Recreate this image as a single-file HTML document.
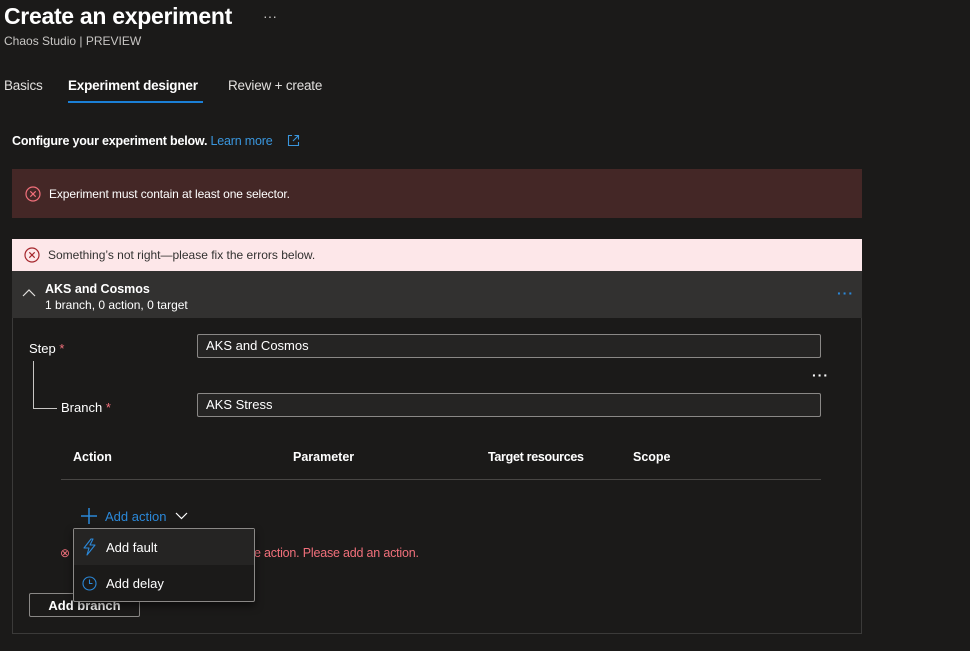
<!DOCTYPE html>
<html><head><meta charset="utf-8"><style>
*{margin:0;padding:0;box-sizing:border-box}
body{width:970px;height:651px;background:#1b1a19;font-family:"Liberation Sans",sans-serif;color:#fff;position:relative;overflow:hidden;font-size:13px}
.a{position:absolute;white-space:nowrap}
.inp{position:absolute;left:197px;width:624px;height:24px;background:#252423;border:1px solid #8a8886;border-radius:2px;padding-left:8px;line-height:22px;font-size:13px}
</style></head><body>
<div class="a" style="left:4px;top:3px;font-size:23px;font-weight:600;letter-spacing:-0.3px">Create an experiment</div>
<div class="a" style="left:263px;top:8px;font-size:14px;color:#c8c6c4">···</div>
<div class="a" style="left:4px;top:34px;font-size:12px;color:#c8c6c4">Chaos Studio | PREVIEW</div>
<div class="a" style="left:4px;top:78px;font-size:13.5px;color:#e1dfdd;letter-spacing:-0.2px">Basics</div>
<div class="a" style="left:68px;top:78px;font-size:13.5px;font-weight:bold;letter-spacing:-0.2px">Experiment designer</div>
<div class="a" style="left:68px;top:101px;width:135px;height:2px;background:#1b7fd6"></div>
<div class="a" style="left:228px;top:78px;font-size:13.5px;color:#e1dfdd;letter-spacing:-0.2px">Review + create</div>
<div class="a" style="left:12px;top:134px;font-weight:bold;font-size:12.5px;letter-spacing:-0.2px">Configure your experiment below. <span style="color:#3a96dd;font-weight:normal">Learn more</span></div>
<svg class="a" style="left:287px;top:134px" width="13" height="13" viewBox="0 0 13 13"><path d="M5 1.5H1.5v10h10V8M7.5 1.5h4v4M11.5 1.5L6 7" stroke="#3a96dd" fill="none" stroke-width="1.1"/></svg>
<div class="a" style="left:12px;top:169px;width:850px;height:49px;background:#442726"></div>
<svg class="a" style="left:25px;top:186px" width="16" height="16" viewBox="0 0 16 16"><circle cx="8" cy="8" r="7" stroke="#f1707b" fill="none" stroke-width="1.2"/><path d="M5.3 5.3l5.4 5.4M10.7 5.3l-5.4 5.4" stroke="#f1707b" stroke-width="1.2"/></svg>
<div class="a" style="left:49px;top:187px;font-size:12px;letter-spacing:-0.1px">Experiment must contain at least one selector.</div>
<div class="a" style="left:12px;top:239px;width:850px;height:33px;background:#fde7e9"></div>
<svg class="a" style="left:24px;top:247px" width="16" height="16" viewBox="0 0 16 16"><circle cx="8" cy="8" r="7" stroke="#a4262c" fill="none" stroke-width="1.2"/><path d="M5.3 5.3l5.4 5.4M10.7 5.3l-5.4 5.4" stroke="#a4262c" stroke-width="1.2"/></svg>
<div class="a" style="left:48px;top:248px;font-size:12px;color:#323130">Something’s not right—please fix the errors below.</div>
<div class="a" style="left:12px;top:271px;width:850px;height:363px;border:1px solid #3b3a39;border-top:none"></div>
<div class="a" style="left:12px;top:271px;width:850px;height:47px;background:#323130"></div>
<svg class="a" style="left:22px;top:288px" width="14" height="10" viewBox="0 0 14 10"><path d="M1 8l6-6 6 6" stroke="#e1dfdd" fill="none" stroke-width="1.2"/></svg>
<div class="a" style="left:45px;top:282px;font-weight:bold;font-size:12.5px">AKS and Cosmos</div>
<div class="a" style="left:45px;top:298px;font-size:12px">1 branch, 0 action, 0 target</div>
<div class="a" style="left:837px;top:285px;color:#2b88d8;font-size:14px;font-weight:bold;letter-spacing:1px">···</div>
<div class="a" style="left:29px;top:341px">Step <span style="color:#f1707b">*</span></div>
<div class="a" style="left:33px;top:361px;width:1px;height:48px;background:#c8c6c4"></div>
<div class="a" style="left:33px;top:408px;width:24px;height:1px;background:#c8c6c4"></div>
<div class="a" style="left:61px;top:400px">Branch <span style="color:#f1707b">*</span></div>
<div class="inp" style="top:334px">AKS and Cosmos</div>
<div class="inp" style="top:393px">AKS Stress</div>
<div class="a" style="left:812px;top:367px;font-size:14px;font-weight:bold;letter-spacing:1px">···</div>
<div class="a" style="left:73px;top:450px;font-weight:bold;font-size:12.5px">Action</div>
<div class="a" style="left:293px;top:450px;font-weight:bold;font-size:12.5px">Parameter</div>
<div class="a" style="left:488px;top:450px;font-weight:bold;font-size:12.5px;letter-spacing:-0.3px">Target resources</div>
<div class="a" style="left:633px;top:450px;font-weight:bold;font-size:12.5px">Scope</div>
<div class="a" style="left:61px;top:479px;width:760px;height:1px;background:#484644"></div>
<svg class="a" style="left:80px;top:507px" width="18" height="18" viewBox="0 0 18 18"><path d="M9 1v16M1 9h16" stroke="#2b88d8" stroke-width="1.5"/></svg>
<div class="a" style="left:105px;top:509px;color:#2b88d8">Add action</div>
<svg class="a" style="left:175px;top:512px" width="13" height="8" viewBox="0 0 13 8"><path d="M1 1l5.5 5.5L12 1" stroke="#fff" fill="none" stroke-width="1.2"/></svg>
<div class="a" style="left:60px;top:546px;color:#f1707b;font-size:12px">⊗</div>
<div class="a" style="left:254px;top:546px;color:#f1707b;font-size:12.5px;letter-spacing:-0.2px">e action. Please add an action.</div>
<div class="a" style="left:29px;top:593px;width:111px;height:24px;border:1px solid #8a8886;border-radius:2px;text-align:center;line-height:24px;font-weight:bold">Add branch</div>
<div class="a" style="left:73px;top:528px;width:182px;height:74px;background:#1b1a19;border:1px solid #8a8886;border-radius:2px;box-shadow:0 4px 8px rgba(0,0,0,.5)"></div>
<div class="a" style="left:74px;top:529px;width:180px;height:36px;background:#252423"></div>
<svg class="a" style="left:82px;top:538px" width="16" height="18" viewBox="0 0 16 18"><path d="M9 1L2 10h5l-2 7 8-10H8l3-6z" stroke="#2b88d8" fill="none" stroke-width="1.1" stroke-linejoin="round"/></svg>
<div class="a" style="left:106px;top:540px">Add fault</div>
<svg class="a" style="left:82px;top:576px" width="15" height="15" viewBox="0 0 15 15"><circle cx="7.5" cy="7.5" r="6.5" stroke="#2b88d8" fill="none" stroke-width="1.1"/><path d="M7.5 3.5v4h3" stroke="#2b88d8" fill="none" stroke-width="1.1"/></svg>
<div class="a" style="left:106px;top:576px">Add delay</div>
</body></html>
